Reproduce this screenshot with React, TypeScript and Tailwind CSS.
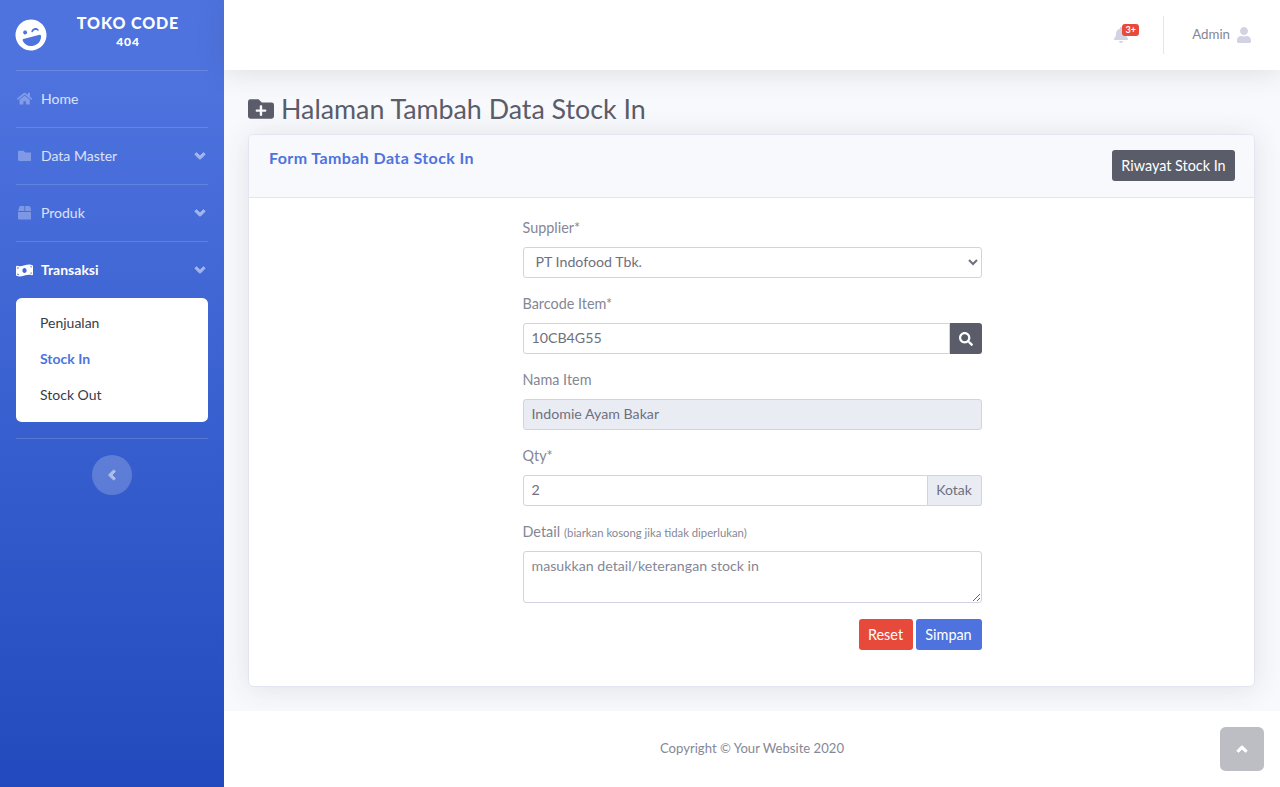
import React from "react";
import {
  FaLaughWink,
  FaHome,
  FaFolder,
  FaBox,
  FaMoneyBillWave,
  FaAngleDown,
  FaAngleLeft,
  FaAngleUp,
  FaBell,
  FaUser,
  FaFolderPlus,
  FaSearch,
} from "react-icons/fa";

function Divider() {
  return <hr className="mx-4 border-0 border-t border-white/15" />;
}

function NavItem({ icon, label, arrow, active }: { icon: React.ReactNode; label: string; arrow?: boolean; active?: boolean }) {
  return (
    <div className={`flex h-14 items-center pl-4 pr-4 text-[14px] ${active ? "font-bold text-white" : "text-white/80"}`}>
      <span className={`mr-2 flex w-[17px] justify-center text-[13.6px] ${active ? "text-white" : "text-white/30"}`}>{icon}</span>
      <span className="pb-[2px]">{label}</span>
      {arrow && <FaAngleDown className="ml-auto stroke-current stroke-[30] text-[16px] text-white opacity-50" />}
    </div>
  );
}

function Sidebar() {
  return (
    <aside className="flex w-[224px] shrink-0 flex-col bg-gradient-to-b from-[#4e73df] from-10% to-[#224abe] to-100%">
      <div className="flex h-[70px] items-center pl-[15px] text-white">
        <FaLaughWink className="-rotate-[15deg] text-[32px]" />
        <div className="mb-[6px] ml-[16px] w-[130px] text-center font-black">
          <div className="text-[16px] leading-[19px] tracking-[0.9px]">TOKO CODE</div>
          <div className="text-[12px] leading-[19px] tracking-[0.8px]">404</div>
        </div>
      </div>
      <Divider />
      <NavItem icon={<FaHome className="shrink-0 text-[15.3px]" />} label="Home" />
      <Divider />
      <NavItem icon={<FaFolder />} label="Data Master" arrow />
      <Divider />
      <NavItem icon={<FaBox />} label="Produk" arrow />
      <Divider />
      <NavItem icon={<FaMoneyBillWave className="shrink-0 text-[17px]" />} label="Transaksi" arrow active />
      <div className="mx-4 mb-4 rounded-[5.6px] bg-white py-2 text-[14px] text-[#3a3b45]">
        <div className="flex h-9 items-center px-6 pb-[3px]">Penjualan</div>
        <div className="flex h-9 items-center px-6 pb-[3px] font-bold text-[#4e73df]">Stock In</div>
        <div className="flex h-9 items-center px-6 pb-[3px]">Stock Out</div>
      </div>
      <Divider />
      <button type="button" className="mx-auto mt-4 flex h-10 w-10 items-center justify-center rounded-full bg-white/20 text-[16px] text-white">
        <FaAngleLeft className="stroke-current stroke-[30] opacity-50" />
      </button>
    </aside>
  );
}

function Topbar() {
  return (
    <header className="relative z-10 flex h-[70px] shrink-0 items-center justify-end bg-white pr-[28px] shadow-[0_2px_28px_0_rgba(58,59,69,0.15)]">
      <div className="relative mr-[34px] text-[16px] text-[#d1d3e2]">
        <FaBell />
        <span className="absolute -top-[3px] left-[9px] flex h-[12px] w-[17px] items-center justify-center rounded-[3px] bg-[#e74a3b] text-[9px] font-bold text-white">
          3+
        </span>
      </div>
      <div className="mr-[28px] h-[38px] w-px bg-[#e3e6f0]" />
      <span className="mr-[6px] text-[13.3px] text-[#858796]">Admin</span>
      <FaUser className="text-[16px] text-[#d1d3e2]" />
    </header>
  );
}

function Group({ label, note, children }: { label: string; note?: string; children: React.ReactNode }) {
  return (
    <div className="mb-[14px]">
      <label className="mb-[7px] flex h-6 items-center text-[14.4px] text-[#858796]">
        <span>{label}</span>
        {note && <span className="ml-1 pt-[2px] text-[11.3px]">{note}</span>}
      </label>
      {children}
    </div>
  );
}

const field = "h-[31px] w-full border border-[#d1d3e2] px-2 pb-[2px] text-[14.2px] text-[#6e707e] outline-none";

function StockForm() {
  return (
    <form className="mx-auto w-[459px]">
      <Group label="Supplier*">
        <select className={`${field} rounded-[3px] bg-white`} defaultValue="PT Indofood Tbk.">
          <option>PT Indofood Tbk.</option>
        </select>
      </Group>
      <Group label="Barcode Item*">
        <div className="flex">
          <input className={`${field} min-w-0 flex-1 rounded-l-[3px]`} defaultValue="10CB4G55" />
          <button type="button" className="flex h-[31px] w-[32px] items-center justify-center rounded-r-[3px] bg-[#5a5c69] text-[14px] text-white">
            <FaSearch />
          </button>
        </div>
      </Group>
      <Group label="Nama Item">
        <input className={`${field} rounded-[3px] bg-[#eaecf4]`} disabled defaultValue="Indomie Ayam Bakar" />
      </Group>
      <Group label="Qty*">
        <div className="flex">
          <input className={`${field} min-w-0 flex-1 rounded-l-[3px]`} defaultValue="2" />
          <span className="flex h-[31px] w-[54px] items-center justify-center rounded-r-[3px] border border-l-0 border-[#d1d3e2] bg-[#eaecf4] pb-[2px] text-[14px] text-[#6e707e]">Kotak</span>
        </div>
      </Group>
      <Group label="Detail" note="(biarkan kosong jika tidak diperlukan)">
        <textarea
          className="block h-[52px] w-full rounded-[3px] border border-[#d1d3e2] px-2 pt-[3px] text-[14.2px] text-[#6e707e] outline-none placeholder:text-[#858796]"
          placeholder="masukkan detail/keterangan stock in"
        />
      </Group>
      <div className="mt-4 flex justify-end gap-[3px]">
        <button type="button" className="h-[31px] w-[54px] rounded-[3px] bg-[#e74a3b] text-[14.4px] text-white">Reset</button>
        <button type="button" className="h-[31px] w-[66px] rounded-[3px] bg-[#4e73df] text-[14.4px] text-white">Simpan</button>
      </div>
    </form>
  );
}

export default function App() {
  return (
    <div className="flex min-h-screen bg-[#f8f9fc] font-['Lato',sans-serif]">
      <Sidebar />
      <div className="flex min-w-0 flex-1 flex-col">
        <Topbar />
        <main className="flex-1 pl-[24px] pr-[25px]">
          <h1 className="mb-[8px] mt-[22px] flex h-[34px] items-center text-[26.8px] text-[#5a5c69]">
            <FaFolderPlus className="mr-[7px] text-[26px]" />
            Halaman Tambah Data Stock In
          </h1>
          <section className="mb-[24px] overflow-hidden rounded-[5.6px] border border-[#e3e6f0] bg-white shadow-[0_2px_28px_0_rgba(58,59,69,0.12)]">
            <div className="flex h-[63px] items-start justify-between border-b border-[#e3e6f0] bg-[#f8f9fc] pl-5 pr-[19px] pt-[11px]">
              <h6 className="text-[16px] font-bold tracking-[0.4px] text-[#4e73df]">Form Tambah Data Stock In</h6>
              <button type="button" className="mt-[4px] h-[31px] w-[123px] rounded-[3px] bg-[#5a5c69] text-[14.4px] text-white">Riwayat Stock In</button>
            </div>
            <div className="pb-[36px] pl-px pt-[18px]">
              <StockForm />
            </div>
          </section>
        </main>
        <footer className="flex h-[76px] shrink-0 items-center justify-center bg-white text-[13.1px] text-[#858796]">
          Copyright © Your Website 2020
        </footer>
      </div>
      <button type="button" className="fixed bottom-4 right-4 flex h-11 w-11 items-center justify-center rounded-[5.6px] bg-[#5a5c69]/40 text-[16px] text-white">
        <FaAngleUp className="stroke-current stroke-[30]" />
      </button>
    </div>
  );
}
